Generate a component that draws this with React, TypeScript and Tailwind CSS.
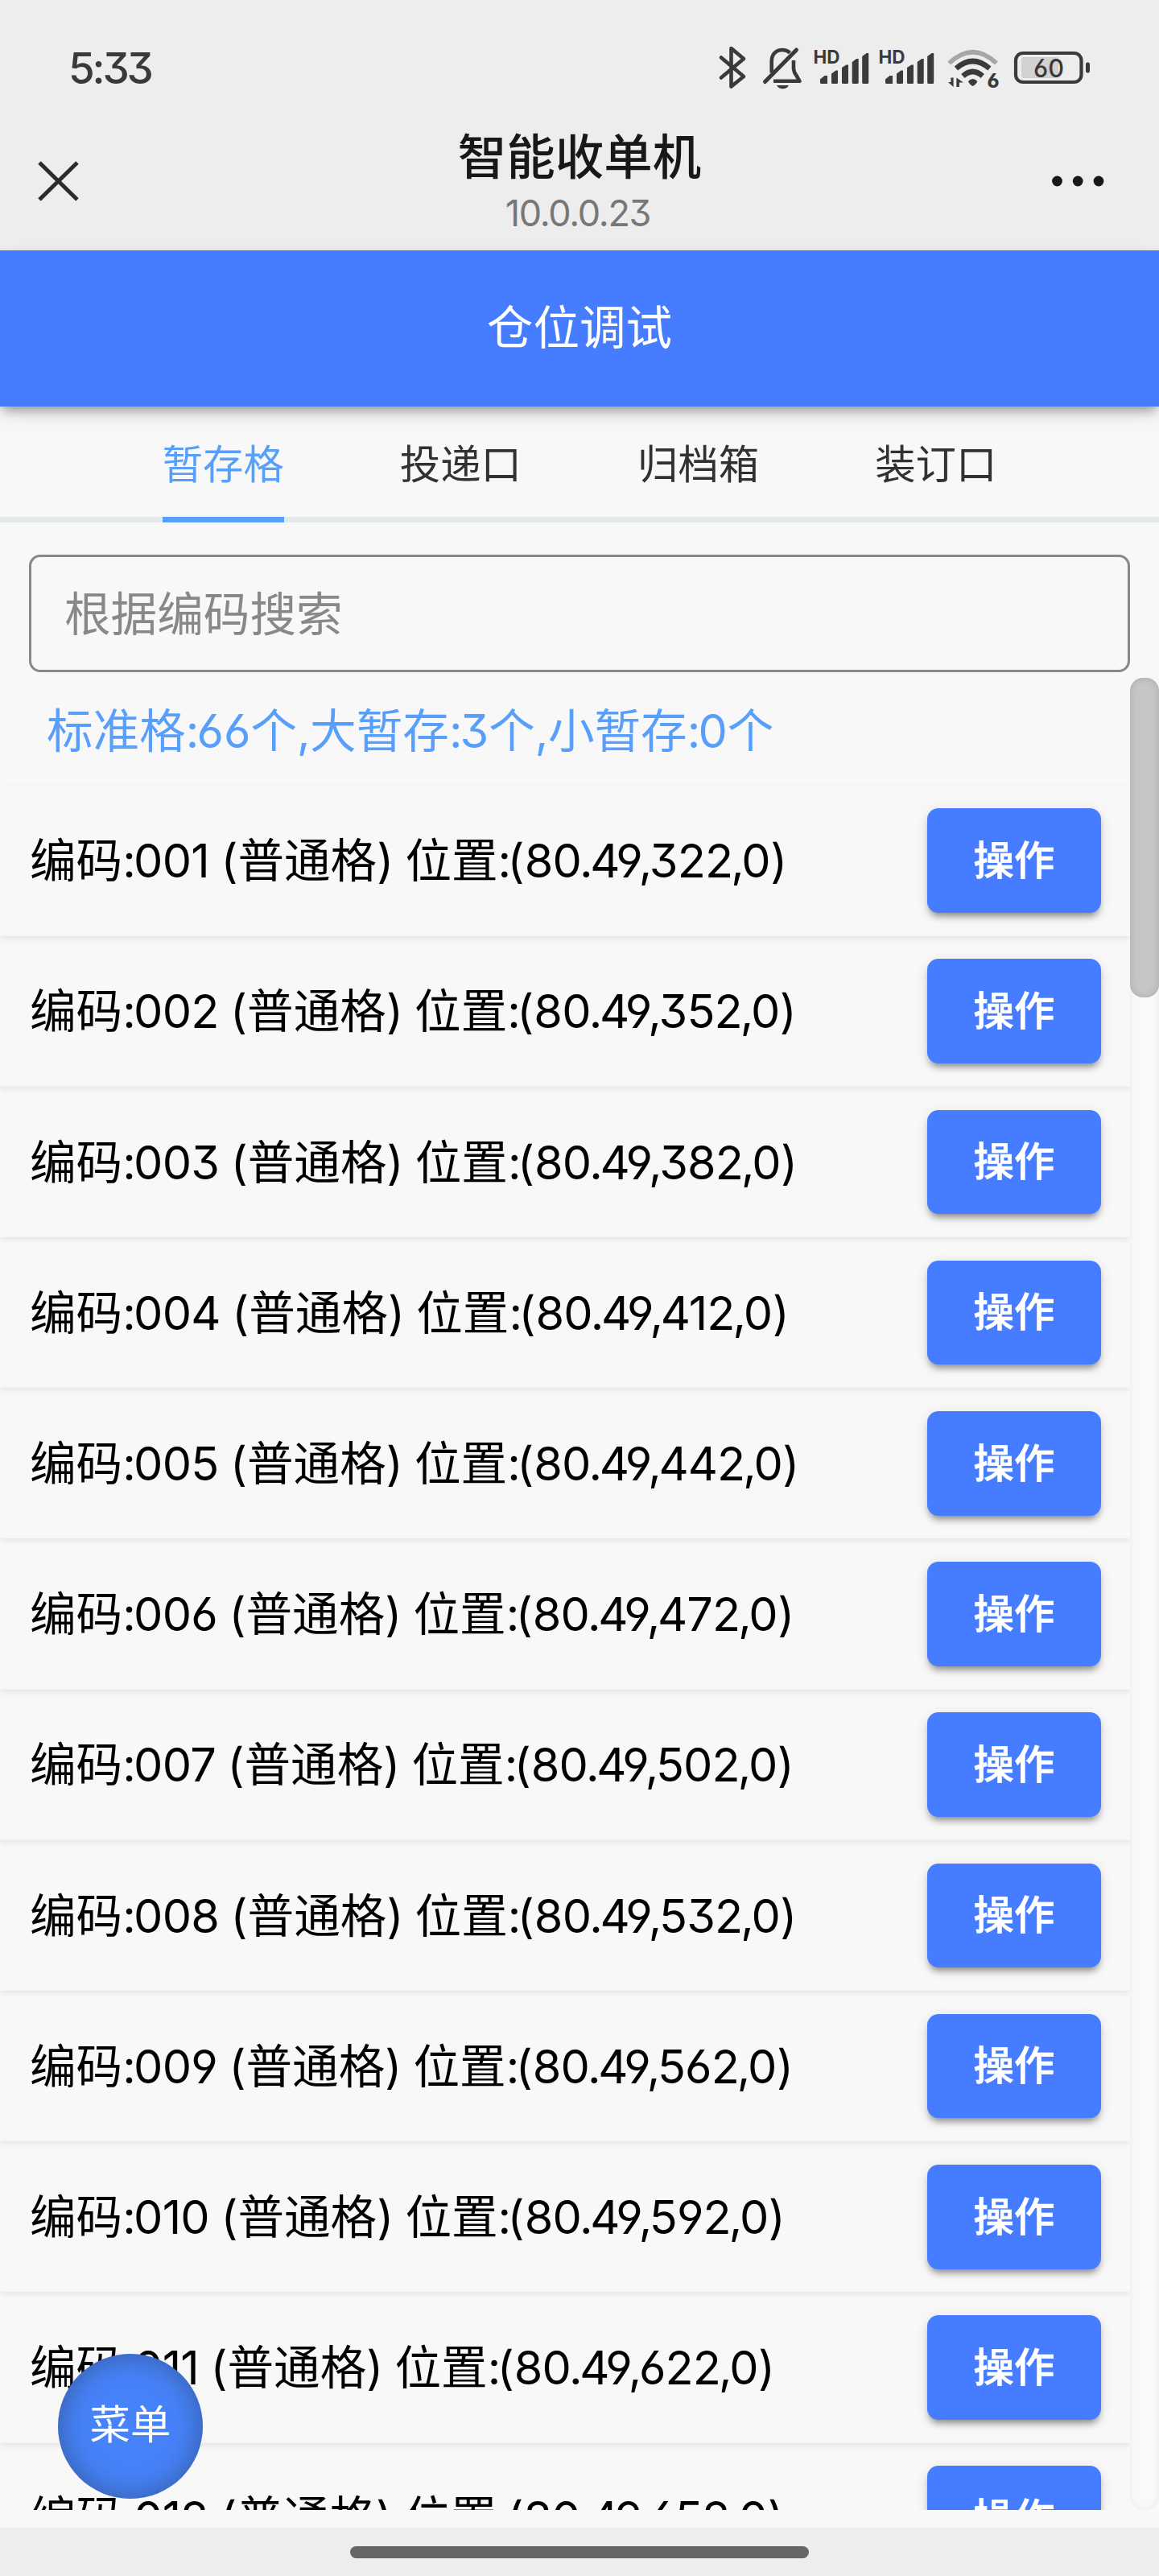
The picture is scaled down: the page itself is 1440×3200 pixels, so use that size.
const ROWS = Array.from({ length: 12 }, (_, i) => ({
  code: String(i + 1).padStart(3, '0'),
  x: '80',
  y: String(322 + i * 30),
}));

const TABS = ['暂存格', '投递口', '归档箱', '装订口'];

function Signal() {
  return (
    <svg viewBox="145 0 81.3 100" className="h-[100px] w-[81.3px]" fill="#3a3a3a">
      <text x="150.500" y="39" fontSize="23" fontWeight="700" textLength="33" lengthAdjust="spacingAndGlyphs">HD</text>
      <path d="M159 62.5V58.5L164.5 54H168V64H160.5Q159 64 159 62.5Z" />
      <path d="M173 51.5L178.500 47.500H181V62.500Q181 64 179.500 64H174.500Q173 64 173 62.500Z" />
      <path d="M186 44L191.500 40.500H194V62.500Q194 64 192.500 64H187.500Q186 64 186 62.500Z" />
      <path d="M198.700 37L204.200 33H206.700V62.500Q206.700 64 205.200 64H200.200Q198.700 64 198.700 62.500Z" />
      <path d="M211.200 30L216.700 26H219.200V62.500Q219.200 64 217.700 64H212.700Q211.200 64 211.200 62.500Z" />
    </svg>
  );
}

function StatusBar() {
  return (
    <div className="flex h-[144px] shrink-0 items-start justify-between pl-[85px]">
      <div className="mt-[50px] text-[53px] font-medium leading-[70px] tracking-[-3.2px] text-[#3a3a3a]">5:33</div>
      <div className="mt-[40px] mr-[80px] flex">
        <svg viewBox="30 0 46 100" className="h-[100px] w-[46px]" fill="none" stroke="#3a3a3a" strokeWidth="4.600" strokeLinecap="round" strokeLinejoin="round">
          <path d="M36 31.500L64 55L48.500 67.500V20L64 33L36 56.500" />
        </svg>
        <svg viewBox="76 0 69 100" className="h-[100px] w-[69px]" fill="none" stroke="#3a3a3a" strokeWidth="4.600" strokeLinejoin="round">
          <path d="M129.500 22L90.500 61.500" strokeLinecap="round" strokeWidth="5" />
          <path d="M98.700 50.500V36C98.700 27 104.500 22 112 22C115.500 22 118.500 23 121.500 25.500" />
          <path d="M126 35V45.500Q126.500 50 129 53L133.500 60.800H101" />
          <path d="M105 66H120Q117.500 70.300 112.500 70.300Q107.500 70.300 105 66Z" fill="#3a3a3a" stroke="none" />
        </svg>
        <Signal />
        <Signal />
        <svg viewBox="307.600 0 80.400 100" className="h-[100px] w-[80.4px]" fill="none" stroke="#3a3a3a" strokeWidth="6.500">
          <path d="M318.800 38.500Q348.200 11 377.600 38.500" stroke="#a6a6a6" strokeWidth="5.500" />
          <path d="M327.500 45Q348.200 27 369 45" />
          <path d="M336 54.500Q348.200 43.500 360.400 54.500" />
          <path d="M342.500 61Q348.200 55 354 61Q352 65.500 348.200 67Q344.500 65.500 342.500 61Z" fill="#3a3a3a" stroke="none" />
          <path d="M324.200 56.500V68L317.500 62H321V56.500ZM328 68V56.500L336.500 62.500H331.500V68Z" fill="#3a3a3a" stroke="none" />
          <text x="366" y="69.500" fontSize="24" fontWeight="800" textLength="15" lengthAdjust="spacingAndGlyphs" fill="#3a3a3a" stroke="none">6</text>
        </svg>
        <svg viewBox="388 0 112 100" className="h-[100px] w-[112px]">
          <rect x="409" y="31" width="46" height="26" rx="3" fill="#d2d2d2" />
          <rect x="402" y="26" width="81.500" height="36" rx="9" fill="none" stroke="#3a3a3a" strokeWidth="4.200" />
          <rect x="489" y="37.500" width="5" height="13" rx="2.200" fill="#3a3a3a" />
          <text x="424" y="55.500" fontSize="31" fontWeight="500" textLength="38" lengthAdjust="spacingAndGlyphs" fill="#3a3a3a">60</text>
        </svg>
      </div>
    </div>
  );
}

function TitleBar() {
  return (
    <div className="flex h-[167px] shrink-0 items-start justify-between">
      <svg viewBox="0 0 144 100" className="mt-[31px] h-[100px] w-[144px]" stroke="#2b2b2b" strokeWidth="5">
        <path d="M49 27L96 73M96 27L49 73" />
      </svg>
      <div className="flex flex-col items-center">
        <div className="mt-[15px] text-[60.500px] font-medium leading-[72px] text-[#181818]">智能收单机</div>
        <div className="mt-[7px] pr-[4px] text-[45px] leading-[54px] tracking-[-1.3px] text-[#777]">10.0.0.23</div>
      </div>
      <svg viewBox="0 0 144 100" className="mt-[31px] h-[100px] w-[144px]" fill="#181818">
        <circle cx="17.500" cy="50" r="6.400" />
        <circle cx="43.200" cy="50" r="6.400" />
        <circle cx="69" cy="50" r="6.400" />
      </svg>
    </div>
  );
}

/** Separator drawn tight against the digits around it. */
function Sep({ children }: { children: string }) {
  return <span className="-ml-[2px] tracking-[-3.4px]">{children}</span>;
}

function RowLabel({ code, x, y }: { code: string; x: string; y: string }) {
  return (
    <div className="pt-[2px] text-[57.6px] leading-none text-black">
      编码<span className="tracking-[-2.8px]">:</span>
      <span className="tracking-[-0.7px]">{code}</span>
      <span className="tracking-[-1.8px]"> </span>(普通格)<span className="tracking-[-2px]"> </span>位置
      <span className="tracking-[-4.6px]">:</span>(
      <span className="tracking-[-0.8px]">{x}</span>
      <Sep>.</Sep>
      <span className="tracking-[-3px]">49</span>
      <Sep>,</Sep>
      <span className="tracking-[-0.9px]">{y}</span>
      <Sep>,</Sep>
      <span className="tracking-[-0.5px]">0</span>)
    </div>
  );
}

export default function App() {
  return (
    <div className="relative flex h-[3200px] w-[1440px] flex-col overflow-hidden whitespace-nowrap bg-[#ededed] font-['Inter','Noto_Sans_CJK_SC',sans-serif] [font-feature-settings:'cv03','cv04','cv09']">
      <StatusBar />
      <TitleBar />
      <div className="flex h-[2829px] shrink-0 flex-col bg-[#f8f8f8]">
        <div className="relative z-10 flex h-[194px] shrink-0 items-center justify-center bg-[#467cff] text-[57.6px] leading-none text-white shadow-[0_7px_14px_-3px_rgba(0,0,0,0.4),0_14px_28px_rgba(0,0,0,0.06)]">
          仓位调试
        </div>
        <div className="flex h-[144px] shrink-0 justify-center gap-[144px] border-b-[7px] border-[#e3e8ea]">
          {TABS.map((t, i) => (
            <div
              key={t}
              className={
                i === 0
                  ? 'h-[144px] w-[151.2px] border-b-[7px] border-[#579ffb] text-[50.4px] leading-[143px] text-[#579ffb]'
                  : 'h-[144px] w-[151.2px] text-[50.4px] leading-[143px] text-[#303133]'
              }
            >
              {t}
            </div>
          ))}
        </div>
        <div className="mx-[36px] mt-[40px] flex h-[146px] shrink-0 items-center rounded-[14px] border-[3px] border-[#888] pt-[3px] pl-[41px] text-[57.6px] leading-none text-[#888]">
          根据编码搜索
        </div>
        <div className="mt-[7px] flex h-[2276px] shrink-0 overflow-hidden">
          <div className="w-[1404px] overflow-hidden">
            <div className="h-[133.5px] pl-[58px] text-[57.6px] leading-[133px] text-[#579ffb]">
              标准格<span className="tracking-[-3px]">:</span>66个<span className="tracking-[-0.5px]">,</span>大暂存
              <span className="tracking-[-3px]">:</span>3个<span className="tracking-[-0.5px]">,</span>小暂存
              <span className="tracking-[-2.8px]">:</span>0个
            </div>
            {ROWS.map((r) => (
              <div key={r.code} className="flex h-[187.2px] items-center justify-between pr-[36px] pl-[37px] shadow-[0_3px_7px_rgba(0,0,0,0.08)]">
                <RowLabel code={r.code} x={r.x} y={r.y} />
                <div className="flex h-[129.6px] w-[216px] items-center justify-center rounded-[14px] bg-[#467cff] text-[50.4px] font-medium leading-none text-white shadow-[0_7px_8px_-3px_rgba(0,0,0,0.4),0_3px_16px_rgba(0,0,0,0.1)] [-webkit-text-stroke:0.7px_white]">
                  操作
                </div>
              </div>
            ))}
          </div>
          <div className="w-[36px] rounded-[18px] bg-[#f9f9f9] shadow-[inset_0_0_7px_rgba(0,0,0,0.08)]">
            <div className="h-[397px] rounded-[16px] bg-[#c6c6c6] shadow-[inset_0_0_10px_rgba(0,0,0,0.14)]" />
          </div>
        </div>
      </div>
      <div className="flex h-[60px] shrink-0 justify-center bg-[#ededed] pt-[23px]">
        <div className="h-[15px] w-[570px] rounded-full bg-[#666]" />
      </div>
      <div className="absolute top-[2924px] left-[72px] z-20 flex size-[180px] items-center justify-center rounded-full bg-[#4683fa] pb-1 text-[50.4px] leading-none text-white shadow-[inset_0_0_36px_rgba(40,50,70,0.5)]">
        菜单
      </div>
    </div>
  );
}
